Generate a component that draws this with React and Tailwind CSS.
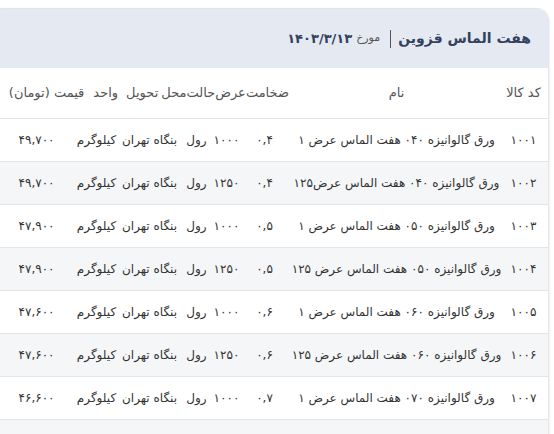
import React from 'react';

const rows = [
  { code: '۱۰۰۱', name: 'ورق گالوانیزه ۰۴۰ هفت الماس عرض ۱', thick: '۰,۴', width: '۱۰۰۰', price: '۴۹,۷۰۰' },
  { code: '۱۰۰۲', name: 'ورق گالوانیزه ۰۴۰ هفت الماس عرض۱۲۵', thick: '۰,۴', width: '۱۲۵۰', price: '۴۹,۷۰۰' },
  { code: '۱۰۰۳', name: 'ورق گالوانیزه ۰۵۰ هفت الماس عرض ۱', thick: '۰,۵', width: '۱۰۰۰', price: '۴۷,۹۰۰' },
  { code: '۱۰۰۴', name: 'ورق گالوانیزه ۰۵۰ هفت الماس عرض ۱۲۵', thick: '۰,۵', width: '۱۲۵۰', price: '۴۷,۹۰۰' },
  { code: '۱۰۰۵', name: 'ورق گالوانیزه ۰۶۰ هفت الماس عرض ۱', thick: '۰,۶', width: '۱۰۰۰', price: '۴۷,۶۰۰' },
  { code: '۱۰۰۶', name: 'ورق گالوانیزه ۰۶۰ هفت الماس عرض ۱۲۵', thick: '۰,۶', width: '۱۲۵۰', price: '۴۷,۶۰۰' },
  { code: '۱۰۰۷', name: 'ورق گالوانیزه ۰۷۰ هفت الماس عرض ۱', thick: '۰,۷', width: '۱۰۰۰', price: '۴۶,۶۰۰' },
];

function Cell({ className = '', children }) {
  return (
    <div className={`flex shrink-0 justify-center whitespace-nowrap ${className}`}>
      {children}
    </div>
  );
}

export default function App() {
  return (
    <div
      dir="rtl"
      className="w-[554px] h-[434px] overflow-hidden bg-white"
      style={{ fontFamily: '"DejaVu Sans", sans-serif' }}
    >
      <div className="mt-2 mr-[5px] w-[560px] border border-[#e3e5e8] rounded-tr-xl rounded-tl-xl shadow-sm overflow-hidden">
        {/* عنوان */}
        <div className="h-[59px] bg-[#e4e9f2] flex items-center pr-[17px]">
          <h2 className="text-[14px] font-bold text-[#33405e]">هفت الماس قزوین</h2>
          <span className="w-px h-[18px] bg-[#555] mr-[7px] ml-[10px]"></span>
          <span className="text-[11px] text-[#555]">مورخ</span>
          <span className="text-[13px] font-bold text-[#33405e] mr-1">۱۴۰۳/۳/۱۳</span>
        </div>

        {/* سرستون ها */}
        <div className="h-[51px] flex items-center border-b border-[#e3e5e8] text-[13px] text-[#555]">
          <Cell className="w-[49px]">کد کالا</Cell>
          <Cell className="w-[205px]">نام</Cell>
          <div className="flex items-center whitespace-nowrap pr-[5px]">
            <span>ضخامت</span>
            <span>عرض</span>
            <span>حالت</span>
            <span>محل</span>
            <span className="mr-[3px]">تحویل</span>
            <span className="mr-[8px]">واحد</span>
            <span className="mr-[9px]">قیمت (تومان)</span>
          </div>
        </div>

        {rows.map((r, i) => (
          <div
            key={r.code}
            className={`h-[43px] flex items-center border-b border-[#e3e5e8] text-[12px] text-[#333] ${
              i % 2 === 1 ? 'bg-[#f5f6f8]' : 'bg-white'
            }`}
          >
            <Cell className="w-[49px]">{r.code}</Cell>
            <Cell className="w-[205px]">{r.name}</Cell>
            <Cell className="w-[59px]">{r.thick}</Cell>
            <Cell className="w-[17px]">{r.width}</Cell>
            <Cell className="w-[43px]">رول</Cell>
            <Cell className="w-[51px]">بنگاه تهران</Cell>
            <Cell className="w-[55px]">کیلوگرم</Cell>
            <Cell className="w-[65px]">{r.price}</Cell>
          </div>
        ))}
        <div className="h-[43px] bg-[#f5f6f8]"></div>
      </div>
    </div>
  );
}
